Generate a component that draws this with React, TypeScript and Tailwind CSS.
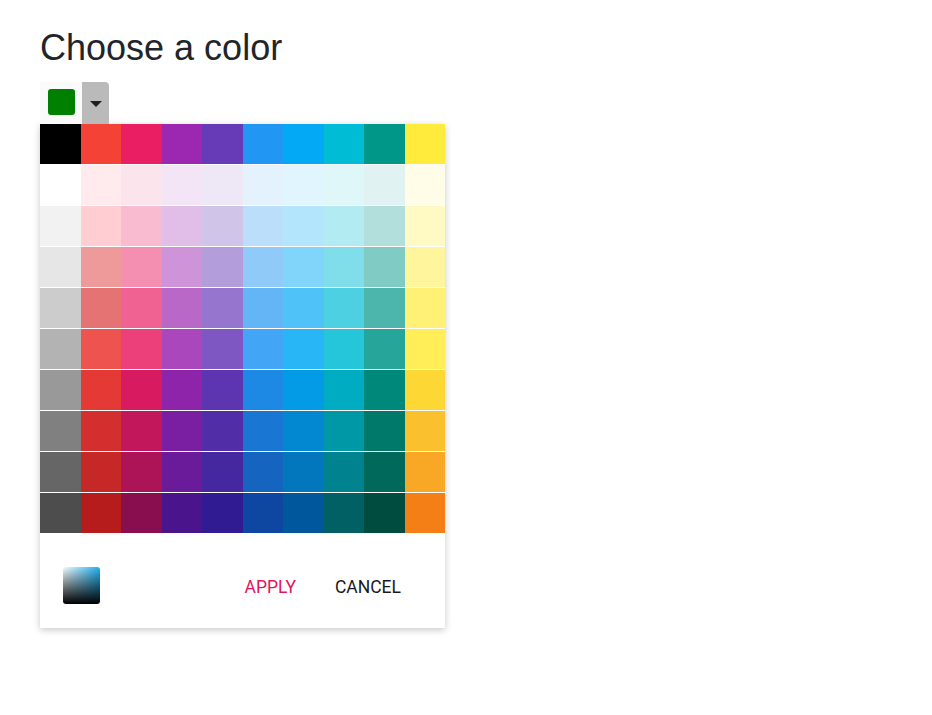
import React from 'react';

// material palette, 10 rows x 10 columns
const palette: string[][] = [
    ['#000000', '#f44336', '#e91e63', '#9c27b0', '#673ab7', '#2196f3', '#03a9f4', '#00bcd4', '#009688', '#ffeb3b'],
    ['#ffffff', '#ffebee', '#fce4ec', '#f3e5f5', '#ede7f6', '#e3f2fd', '#e1f5fe', '#e0f7fa', '#e0f2f1', '#fffde7'],
    ['#f2f2f2', '#ffcdd2', '#f8bbd0', '#e1bee7', '#d1c4e9', '#bbdefb', '#b3e5fc', '#b2ebf2', '#b2dfdb', '#fff9c4'],
    ['#e6e6e6', '#ef9a9a', '#f48fb1', '#ce93d8', '#b39ddb', '#90caf9', '#81d4fa', '#80deea', '#80cbc4', '#fff59d'],
    ['#cccccc', '#e57373', '#f06292', '#ba68c8', '#9575cd', '#64b5f6', '#4fc3f7', '#4dd0e1', '#4db6ac', '#fff176'],
    ['#b3b3b3', '#ef5350', '#ec407a', '#ab47bc', '#7e57c2', '#42a5f5', '#29b6f6', '#26c6da', '#26a69a', '#ffee58'],
    ['#999999', '#e53935', '#d81b60', '#8e24aa', '#5e35b1', '#1e88e5', '#039be5', '#00acc1', '#00897b', '#fdd835'],
    ['#808080', '#d32f2f', '#c2185b', '#7b1fa2', '#512da8', '#1976d2', '#0288d1', '#0097a7', '#00796b', '#fbc02d'],
    ['#666666', '#c62828', '#ad1457', '#6a1b9a', '#4527a0', '#1565c0', '#0277bd', '#00838f', '#00695c', '#f9a825'],
    ['#4d4d4d', '#b71c1c', '#880e4f', '#4a148c', '#311b92', '#0d47a1', '#01579b', '#006064', '#004d40', '#f57f17'],
];

const SplitButton: React.FC<{ value: string }> = ({ value }) => (
    <div className="flex w-[69px] h-[42px]">
        <div className="flex w-[42px] items-start justify-center pt-[7px] bg-[#fafafa] rounded-tl-[3px]">
            <span className="block w-[27px] h-[26px] rounded-[3px]" style={{ backgroundColor: value }} />
        </div>
        <div className="flex w-[27px] items-start justify-center pt-[19px] bg-[#bababa] rounded-tr-[4px]">
            <svg width="12" height="6" viewBox="0 0 12 6">
                <path d="M0 0h12L6 6z" fill="#1f1f1f" />
            </svg>
        </div>
    </div>
);

const Palette: React.FC = () => (
    <div className="w-[405px] bg-white shadow-[0_2px_7px_rgba(0,0,0,0.22)]">
        <div className="grid grid-cols-10 gap-y-px bg-white">
            {palette.flat().map((c, i) => (
                <div key={i} className="h-10" style={{ backgroundColor: c }} />
            ))}
        </div>
        <div className="flex items-start h-[95px] pt-[34px] pl-[23px] pr-[44px]">
            <div className="w-[37px] h-[37px] rounded-[3px] bg-[linear-gradient(to_bottom,rgba(0,0,0,0),#000),linear-gradient(to_right,#f4fcff,#1fb0f0)]" />
            <div className="ml-auto flex items-center gap-[39px] pt-[10px] font-['Roboto',sans-serif] text-[17.5px] leading-5">
                <button className="text-[#e3165b]">APPLY</button>
                <button className="text-[#1a1a1a]">CANCEL</button>
            </div>
        </div>
    </div>
);

export default function App() {
    return (
        <div className="min-h-[715px] bg-white px-10 pt-[26px] font-['Liberation_Sans',Arial,sans-serif]">
            <h1 className="text-[36px] leading-[43px] text-[#212529]">Choose a color</h1>
            <div className="mt-[13px]">
                <SplitButton value="#008000" />
                <Palette />
            </div>
        </div>
    );
}
